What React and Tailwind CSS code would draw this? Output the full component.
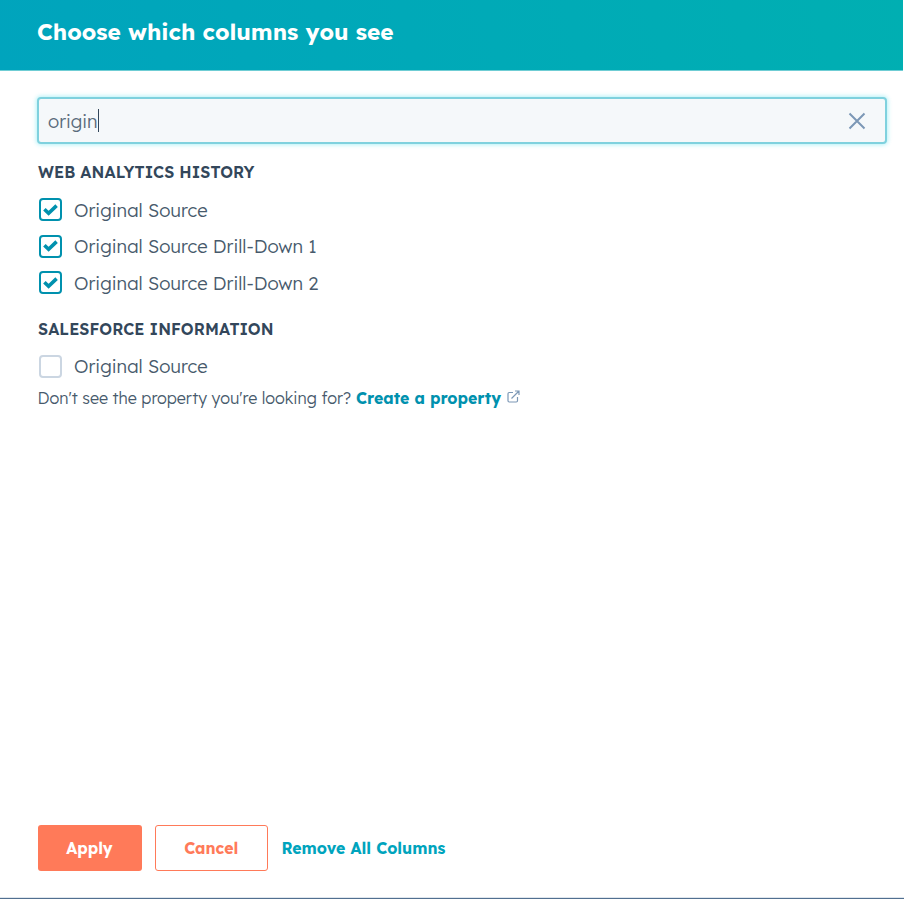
import { useState } from "react";

const GROUPS = [
    {
        title: "WEB ANALYTICS HISTORY",
        columns: [
            { id: "source", label: "Original Source", checked: true },
            { id: "drill1", label: "Original Source Drill-Down 1", checked: true },
            { id: "drill2", label: "Original Source Drill-Down 2", checked: true },
        ],
    },
    {
        title: "SALESFORCE INFORMATION",
        columns: [{ id: "sf-source", label: "Original Source", checked: false }],
    },
];

const Checkbox = ({ checked }) => (
    <span
        className={`flex size-[23px] shrink-0 items-center justify-center rounded-[4px] border-2 bg-white ${
            checked ? "border-[#0091ae]" : "border-[#cbd6e2]"
        }`}
    >
        {checked && (
            <svg width="15" height="12" viewBox="0 0 15 12" fill="none">
                <path d="M1.4 5.2 5.6 9.2 13.6 1.6" stroke="#0091ae" strokeWidth="3.6" />
            </svg>
        )}
    </span>
);

const ColumnOption = ({ label, checked, onToggle }) => (
    <button
        type="button"
        role="checkbox"
        aria-checked={checked}
        onClick={onToggle}
        className="flex h-[36.5px] items-center pl-[2px] text-left"
    >
        <Checkbox checked={checked} />
        <span className="ml-[12px] pt-[1.5px] text-[18.4px] font-light tracking-[0.03px] whitespace-nowrap text-[#475a6c]">
            {label}
        </span>
    </button>
);

const App = () => {
    const [selected, setSelected] = useState(
        GROUPS.flatMap((group) => group.columns).filter((col) => col.checked).map((col) => col.id)
    );

    const toggle = (id) => {
        setSelected((prev) => (prev.includes(id) ? prev.filter((item) => item !== id) : [...prev, id]));
    };

    return (
        <div className="flex h-[900px] w-[904px] flex-col bg-white pb-px font-['Lexend_Deca','Inter',sans-serif] text-[#33475b]">
            <header className="mr-px h-[71px] shrink-0 border-b border-[#6fcdd4] bg-linear-[76deg,#00a4bd,#00afb2] pt-[16px] pl-[37px]">
                <h1 className="text-[22.7px] leading-8 font-bold whitespace-nowrap text-white">
                    Choose which columns you see
                </h1>
            </header>

            <main className="flex-1 pt-[26px] pr-[17px] pl-[37px]">
                <div className="flex h-[47px] items-center rounded-[4px] border-2 border-[#7fd1de] bg-[#f5f8fa] pr-[19px] pl-[9px] shadow-[0_0_4px_1px_rgba(0,208,228,0.3)]">
                    <span className="pt-[2px] text-[18.4px] font-light text-[#5a6b7b]">origin</span>
                    <span className="h-[23px] w-px bg-[#33475b]" />
                    <svg className="mt-px ml-auto" width="18" height="18" viewBox="0 0 18 18" fill="none">
                        <path d="M1.5 1.5 16.5 16.5M16.5 1.5 1.5 16.5" stroke="#7c98b6" strokeWidth="2" />
                    </svg>
                </div>

                {GROUPS.map((group) => (
                    <section key={group.title} className="pt-[16px]">
                        <h2 className="mb-[7.4px] pl-px text-[16px] leading-[24px] font-semibold tracking-[0.07px] whitespace-nowrap">
                            {group.title}
                        </h2>
                        <div className="flex flex-col">
                            {group.columns.map((col) => (
                                <ColumnOption
                                    key={col.id}
                                    label={col.label}
                                    checked={selected.includes(col.id)}
                                    onToggle={() => toggle(col.id)}
                                />
                            ))}
                        </div>
                    </section>
                ))}

                <p className="flex items-center pl-[0.6px] text-[16.1px] leading-[26px] font-light whitespace-nowrap text-[#475a6c]">
                    <span>Don&apos;t see the property you&apos;re looking for?</span>
                    <a href="#create" className="ml-[5px] flex items-center text-[15.9px] font-bold text-[#0091ae]">
                        <span>Create a property</span>
                        <svg className="mb-[2px] ml-[6px]" width="13" height="13" viewBox="0 0 13 13" fill="none" stroke="#7c98b6" strokeWidth="1.2">
                            <path d="M6 2.5H2.2Q1 2.5 1 3.7V10.8Q1 12 2.2 12H9.3Q10.5 12 10.5 10.8V7M4.5 8.5 12 1M8 1H12V5" />
                        </svg>
                    </a>
                </p>
            </main>

            <footer className="flex shrink-0 items-center pb-[26px] pl-[38px] text-[15.85px] font-bold">
                <button type="button" className="h-[46px] w-[104px] rounded-[3px] bg-[#ff7a59] pt-px pr-px text-white">
                    Apply
                </button>
                <button type="button" className="ml-[13px] h-[46px] w-[112.5px] rounded-[3px] border border-[#ff7a59] bg-white pt-px text-[#ff7a59]">
                    Cancel
                </button>
                <button type="button" className="ml-[14px] pt-px whitespace-nowrap text-[#00a4bd]">
                    Remove All Columns
                </button>
            </footer>
            <div className="h-[2px] shrink-0 border-t border-[#dfe6ed] bg-[#516f90]" />
        </div>
    );
};

export default App;
